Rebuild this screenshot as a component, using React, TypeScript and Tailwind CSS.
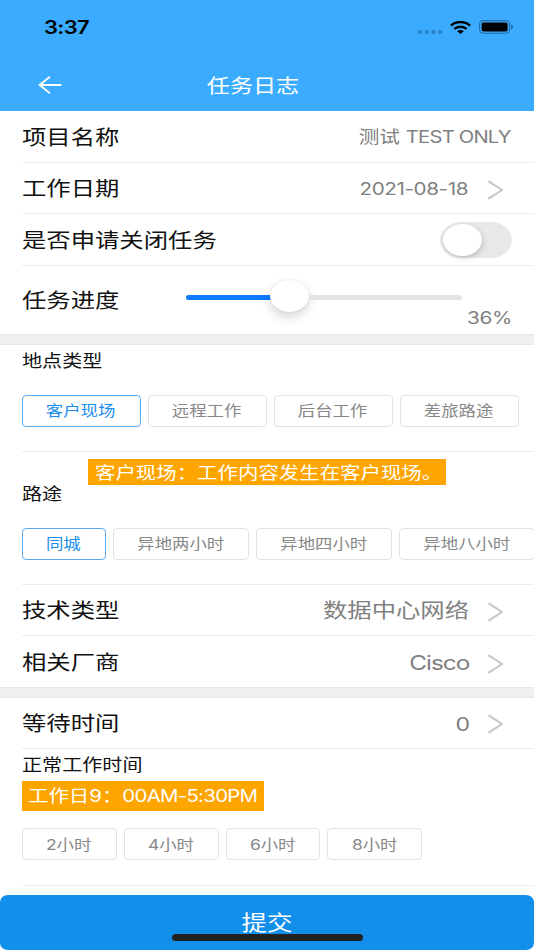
import type { ReactNode } from 'react';
import clsx from 'clsx';

const origins = {
  left: 'origin-left',
  center: 'origin-center',
  right: 'origin-right',
};

// wide text used all over the app
function Wide({ children, from = 'left', className }: { children: ReactNode; from?: keyof typeof origins; className?: string }) {
  return <span className={clsx('inline-block whitespace-nowrap scale-x-[1.217]', origins[from], className)}>{children}</span>;
}

function Chevron() {
  return (
    <svg className="mt-[1px] ml-[19px] mr-[9px] h-[20px] w-[15px] shrink-0" viewBox="0 0 15 20" fill="none" stroke="#c7c7c7" strokeWidth="2">
      <path d="M0.4 1.2 L14 10 L0.4 18.8" />
    </svg>
  );
}

function Row({ label, value, small, arrow, last, children }: { label: string; value?: ReactNode; small?: boolean; arrow?: boolean; last?: boolean; children?: ReactNode }) {
  return (
    <div className={clsx('ml-[22px] flex items-center pt-[3px] pr-[22px]', last ? 'h-[51px]' : 'h-[51.5px] border-b border-[#ececec]')}>
      <Wide className="text-[20px] text-[#111]">{label}</Wide>
      <div className="ml-auto flex items-center">
        {value && <Wide from="right" className={clsx('text-[#808080]', small ? 'text-[17px]' : 'text-[20px]')}>{value}</Wide>}
        {children}
        {arrow && <Chevron />}
      </div>
    </div>
  );
}

function Pill({ label, active, className }: { label: string; active?: boolean; className: string }) {
  return (
    <button
      className={clsx(
        'flex h-[32px] shrink-0 items-center justify-center rounded-[4px] border pt-[2px] pr-[1px] text-[14.3px]',
        active ? 'border-[#5aaef5] text-[#1b8eee]' : 'border-[#e2e2e2] text-[#888]',
        className,
      )}
    >
      <Wide from="center">{label}</Wide>
    </button>
  );
}

const Band = () => <div className="h-[11px] shrink-0 border-y border-[#e7e7e7] bg-[#f0f0f0]" />;

const places = ['客户现场', '远程工作', '后台工作', '差旅路途'];
const trips = ['同城', '异地两小时', '异地四小时', '异地八小时'];
const hours = ['2小时', '4小时', '6小时', '8小时'];

export default function App() {
  return (
    <div className="relative flex h-[950px] w-[534px] flex-col overflow-hidden bg-white font-[Inter,'Noto_Sans_CJK_SC',sans-serif] leading-none">
      <header className="h-[111px] shrink-0 bg-[#3aabff]">
        <div className="flex h-[54px] items-center pl-[44px] pr-[20px]">
          <Wide className="mt-[2px] text-[18px] font-semibold tracking-[-0.5px] text-black">3:37</Wide>
          <div className="ml-auto flex items-center">
            <svg className="mt-[9px] h-[4px] w-[25px]" viewBox="0 0 25 4" fill="#2d84c7">
              <rect x="0" width="4.6" height="4" rx="2" />
              <rect x="6.6" width="4.6" height="4" rx="2" />
              <rect x="13.2" width="4.6" height="4" rx="2" />
              <rect x="19.8" width="4.6" height="4" rx="2" />
            </svg>
            <svg className="ml-[7px] h-[13px] w-[21px]" viewBox="0 0 21 13" fill="none" stroke="#000" strokeWidth="2.5">
              <path d="M0.9 4.6 C6 -0.1 15 -0.1 20.1 4.6" />
              <path d="M4.3 7.9 C7.7 4.9 13.3 4.9 16.7 7.9" />
              <path d="M7.2 10.2 C9 8.7 12 8.7 13.8 10.2 L10.5 13 Z" fill="#000" stroke="none" />
            </svg>
            <svg className="ml-[8px] h-[14px] w-[35px]" viewBox="0 0 35 14">
              <rect x="0.6" y="0.6" width="30" height="12.6" rx="3.6" fill="none" stroke="#236da5" strokeWidth="1.1" />
              <rect x="2.6" y="2.4" width="26" height="9" rx="2" fill="#000" />
              <path d="M32.2 4.6 C34.6 5.2 34.6 8.8 32.2 9.4 Z" fill="#236da5" />
            </svg>
          </div>
        </div>
        <div className="grid h-[62px] grid-cols-[1fr_auto_1fr] items-center pl-[38px] pr-[66px]">
          <svg className="h-[18px] w-[24px]" viewBox="0 0 24 18" fill="none" stroke="#fff" strokeWidth="1.9" strokeLinecap="round" strokeLinejoin="round">
            <path d="M11.3 1.2 L1.6 9 L11.3 16.8 M1.6 9 H22.6" />
          </svg>
          <Wide from="center" className="mt-[2px] text-[19px] text-white">任务日志</Wide>
        </div>
      </header>

      <section className="shrink-0">
        <Row label="项目名称" value={<>测试 <span className="mr-[1px] text-[16.6px] tracking-[-0.65px]">TEST ONLY</span></>} small />
        <Row label="工作日期" value={<span className="mr-[0.7px] tracking-[-0.35px]">2021-08-18</span>} small arrow />
        <Row label="是否申请关闭任务">
          <div className="mb-[2px] flex h-[36px] w-[72.5px] items-center rounded-[22px/18px] bg-[#e8e8ea] pl-[3px]">
            <div className="h-[32px] w-[39px] rounded-[50%] bg-white shadow-[1px_2px_5px_rgba(0,0,0,0.18)]" />
          </div>
        </Row>
        <div className="ml-[22px] flex h-[68.5px] pr-[22px]">
          <Wide className="mt-[25px] text-[20px] text-[#111]">任务进度</Wide>
          <div className="ml-[84px] mt-[14px] flex h-[35px] w-[276px] items-center">
            <div className="h-[5px] w-[90px] rounded-l-full bg-[#0a7aff]" />
            <div className="mb-[3px] -ml-[6px] h-[32px] w-[39px] shrink-0 rounded-[50%] bg-white shadow-[0_5px_11px_rgba(0,0,0,0.16),0_0_2px_rgba(0,0,0,0.12)]" />
            <div className="h-[5px] flex-1 rounded-r-full bg-[#e3e3e4]" />
          </div>
          <Wide from="right" className="ml-auto mt-[44px] text-[17px] tracking-[-0.3px] text-[#808080]">36%</Wide>
        </div>
      </section>
      <Band />

      <section className="shrink-0">
        <div className="ml-[22px] h-[106.5px] border-b border-[#ececec] pt-[8px]">
          <Wide className="text-[16.5px] text-[#111]">地点类型</Wide>
          <div className="mt-[25px] flex gap-[7px]">
            {places.map((p, i) => <Pill key={p} label={p} active={i === 0} className="w-[119px]" />)}
          </div>
        </div>
        <div className="ml-[22px] h-[133px] border-b border-[#ececec] pt-[7.5px]">
          <div className="ml-[66px] flex h-[26px] w-[358px] items-center bg-[#ffa500] pt-[2px] pl-[6.5px]">
            <Wide className="text-[16.8px] text-white">客户现场：工作内容发生在客户现场。</Wide>
          </div>
          <Wide className="mt-[1px] text-[16.5px] text-[#111]">路途</Wide>
          <div className="mt-[25px] flex gap-[7px] overflow-hidden">
            {trips.map((t, i) => <Pill key={t} label={t} active={i === 0} className={i === 0 ? 'w-[84px]' : 'w-[136px]'} />)}
          </div>
        </div>
        <Row label="技术类型" value="数据中心网络" arrow />
        <Row label="相关厂商" value={<span className="tracking-[-0.8px]">Cisco</span>} arrow last />
      </section>
      <Band />

      <section className="-mt-[1px] shrink-0">
        <Row label="等待时间" value={<span className="text-[19px] tracking-[-0.7px]">0</span>} arrow />
        <div className="ml-[22px] h-[137px] border-b border-[#ececec] pt-[8px]">
          <Wide className="text-[16.5px] text-[#111]">正常工作时间</Wide>
          <div className="mt-[8px] flex h-[30px] w-[242px] items-center bg-[#ffa500] pt-[1px] pl-[5.5px]">
            <Wide className="text-[16.8px] text-white">工作日9：<span className="tracking-[-0.6px]">00AM-5:30PM</span></Wide>
          </div>
          <div className="mt-[17px] flex gap-[7px]">
            {hours.map((h) => <Pill key={h} label={h} className="w-[94.8px]" />)}
          </div>
        </div>
      </section>

      <button className="mt-auto h-[55px] shrink-0 rounded-[8px/7px] bg-[#128eeb] text-[21px] text-white">
        <Wide from="center">提交</Wide>
      </button>
      <div className="absolute bottom-[9px] left-[172px] h-[7px] w-[191px] rounded-full bg-[#222]" />
    </div>
  );
}
